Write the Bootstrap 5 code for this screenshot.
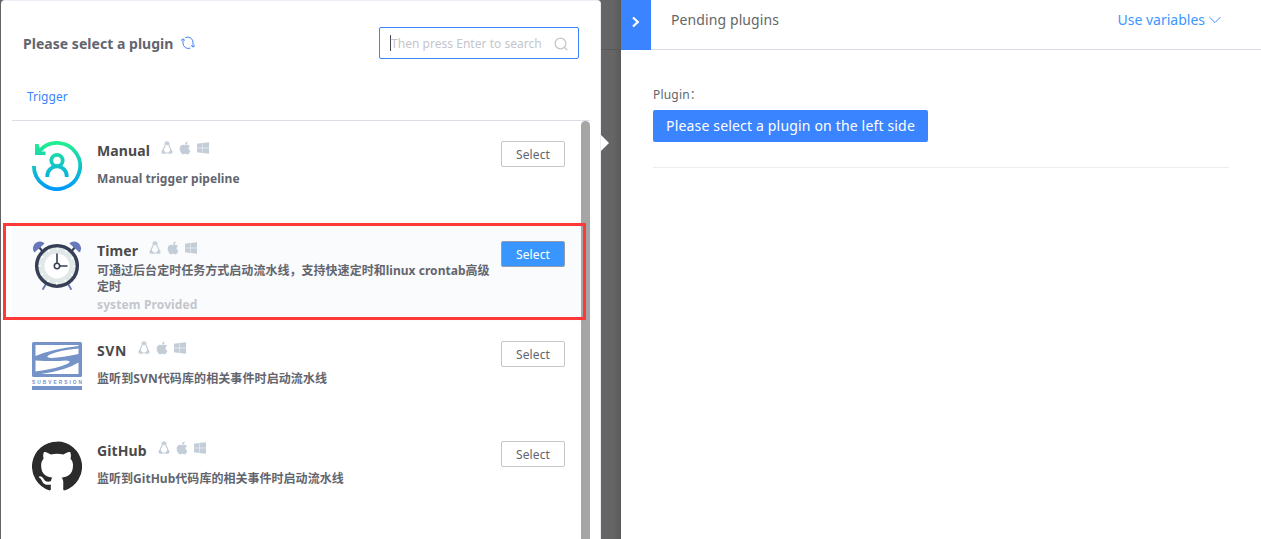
<!DOCTYPE html>
<html lang="en">
<head>
<meta charset="utf-8">
<meta name="viewport" content="width=device-width, initial-scale=1">
<title>Select a plugin</title>
<link href="https://cdn.jsdelivr.net/npm/bootstrap@5.3.0/dist/css/bootstrap.min.css" rel="stylesheet">
<style>
  body{font-family:"Noto Sans","Noto Sans CJK SC",sans-serif;font-size:12px;line-height:16px;color:#63656e;background:#636363;height:539px}
  .picker{width:600px;margin-left:1px;background:#fff;border-top:1px solid #ebeef5;border-right:1px solid #ebeef5;border-radius:4px 4px 0 0}
  .picker-head{height:85px;padding:0 21px 1px 22px}
  .picker-title{font-size:14px;font-weight:700;color:#63656e;padding-top:1px;letter-spacing:.03px}
  .search-box{width:200px;height:32px;border:1px solid #3a84ff;border-radius:2px;padding:1px 10px 0;color:#c4c6cc;letter-spacing:.03px}
  .caret{width:1px;height:16px;background:#45474d;margin-top:-1px}
  .tab-row{height:35px;margin:0 10px 0 11px;padding-left:15px;border-bottom:1px solid #dcdee5;color:#3a84ff}
  .tab-row span{line-height:21px}
  .plugins{margin:0 10px 0 11px}
  .thumb{width:9px;background:#a5a5a5;border-radius:5px 5px 0 0}
  .plugin{height:100px;padding:20px 16px 0 20px}
  .plugin.current{background:#fafbfd}
  .logo{width:50px;height:50px;margin-right:15px}
  .plugin-name{font-size:14px;line-height:20px;font-weight:700;color:#4a4a4a;letter-spacing:.1px}
  .os{height:14px;color:#c3cdd7;margin-left:11px}
  .desc{font-weight:700;width:398px;margin-top:10px;letter-spacing:.07px}
  .cjk{letter-spacing:.03px}
  .wide{letter-spacing:.6px}
  .current .desc{margin-top:2px;margin-right:-10px}
  .by{font-weight:700;color:#c4c6cc;margin-top:2px;letter-spacing:.12px}
  .pick{width:64px;height:26px;border:1px solid #c4c6cc;border-radius:2px;background:#fff;color:#63656e;font-size:12px;line-height:26px;padding:0;letter-spacing:.12px}
  .current .pick{background:#3a96ff;color:#fff;border-color:#979bb0}
  .marker{left:3px;top:223px;width:583px;height:97px;border:3px solid #ff3838}
  .gutter{width:20px;background:linear-gradient(90deg,#656565 60%,#5a5a5a)}
  .gutter-line{top:49px;height:1px;background:#575757}
  .pointer{left:0;top:135px;border:8px solid transparent;border-left-color:#fff;border-right:0}
  .side{background:#fff}
  .side-head{height:50px;border-bottom:1px solid #dcdee5;font-size:14px;padding-right:40px}
  .collapse-btn{width:30px;height:50px;background:#3a84ff;margin-right:20px;padding-bottom:6px}
  .side-head .label{line-height:40px;color:#666;letter-spacing:.1px}
  .use{line-height:40px;color:#3c96ff}
  .side-body{margin:0 32px;padding-top:37px;height:118px;border-bottom:1px solid #ebedf0}
  .field{letter-spacing:.2px}
  .hint{width:275px;height:32px;border-radius:2px;background:#3a84ff;color:#fff;font-size:14px;line-height:31px;margin-top:7px;letter-spacing:.17px}
</style>
</head>
<body class="d-flex overflow-hidden position-relative">
<svg class="position-absolute" width="0" height="0">
  <symbol id="tux" viewBox="0 0 12 14"><path d="M6 .8C4.400.8 4 2 4.100 3.700c.1 1.700-1.800 3.200-2 5.500M6 .8c1.600 0 2 1.200 1.900 2.900-.1 1.700 1.800 3.200 2 5.500" fill="none" stroke="currentColor" stroke-width="1.200"/><path d="M.8 9.300l1.500-.5 2.300 2.800-.7 1.500-3.400-.9zM11.200 9.300l-1.500-.5-2.300 2.800.7 1.500 3.400-.9zM4.300 11.600h3.400v.9H4.300zM4.300 1.500h3.400v1.500L6 4.600 4.300 3z" fill="currentColor"/></symbol>
  <symbol id="apple" viewBox="0 0 384 512"><path fill="currentColor" d="M318.700 268.700c-.2-36.700 16.400-64.400 50-84.800-18.800-26.900-47.200-41.700-84.700-44.600-35.500-2.800-74.300 20.700-88.500 20.700-15 0-49.400-19.700-76.400-19.700C63.300 141.200 4 184.800 4 273.500q0 39.300 14.400 81.200c12.800 36.700 59 126.700 107.200 125.200 25.200-.6 43-17.900 75.800-17.900 31.800 0 48.300 17.900 76.400 17.900 48.600-.7 90.400-82.500 102.600-119.300-65.200-30.700-61.700-90-61.700-91.900zm-56.600-164.200c27.300-32.400 24.800-61.900 24-72.500-24.100 1.400-52 16.400-67.900 34.900-17.500 19.800-27.800 44.300-25.600 71.900 26.100 2 49.900-11.400 69.500-34.300z"/></symbol>
  <symbol id="win" viewBox="0 0 12 14"><path fill="currentColor" d="M0 2.800l5-.7v4.700H0zM5.400 2L12 1.200v5.600H5.400zM0 7.200h5v4.700l-5-.7zM5.400 7.200H12v5.600l-6.600-.8z"/></symbol>
  <symbol id="os-set" viewBox="0 0 48 14"><use href="#tux" width="12" height="14"/><use href="#apple" x="17.500" y="-.3" width="13" height="14.600"/><use href="#win" x="36" width="12" height="14"/></symbol>
</svg>

<main class="picker flex-shrink-0 d-flex flex-column">
  <div class="picker-head d-flex align-items-center justify-content-between">
    <div class="d-flex align-items-center">
      <span class="picker-title">Please select a plugin</span>
      <svg class="ms-2" width="14" height="14" viewBox="0 0 14 14" fill="none" stroke="#3a84ff" stroke-width="1"><path d="M2 3.200v4A5.300 5.300 0 0 0 9.300 12.100M4.300 1.600A5.400 5.400 0 0 1 12 7v4M0 4.500l2-1.700 2 1.700M10 9.500l2 1.600 2-1.600"/></svg>
    </div>
    <div class="search-box d-flex align-items-center">
      <span class="caret"></span><span class="flex-grow-1 text-nowrap">Then press Enter to search</span>
      <svg width="14" height="14" viewBox="0 0 14 14" fill="none" stroke="#c4c6cc" stroke-width="1.300"><circle cx="6.500" cy="6.500" r="5.400"/><path d="M10.400 10.400l2.900 2.500"/></svg>
    </div>
  </div>
  <div class="tab-row"><span>Trigger</span></div>
  <div class="plugins d-flex flex-grow-1">
    <div class="flex-grow-1">
      <section class="plugin d-flex">
        <svg class="logo flex-shrink-0" viewBox="0 0 50 50"><defs><linearGradient id="mg" gradientUnits="userSpaceOnUse" x1="0" y1="0" x2="0" y2="50"><stop offset="0" stop-color="#22f28c"/><stop offset="1" stop-color="#0096ff"/></linearGradient></defs><g fill="none" stroke="url(#mg)" stroke-width="3.800"><path d="M1.900 25A23.100 23.100 0 1 0 7 10.500"/><circle cx="25" cy="19.500" r="5.700"/><path d="M15.300 36v-1a9.700 9.700 0 0 1 19.400 0v1"/></g><path d="M3 3v11h10.500v-3.500H9L6.500 3z" fill="url(#mg)"/></svg>
        <div class="flex-grow-1">
          <div class="d-flex"><span class="plugin-name">Manual</span><svg class="os" width="48" height="14"><use href="#os-set"/></svg></div>
          <div class="desc">Manual trigger pipeline</div>
        </div>
        <button class="btn pick flex-shrink-0">Select</button>
      </section>
      <section class="plugin current d-flex">
        <svg class="logo flex-shrink-0" viewBox="0 0 50 50">
          <path d="M14 43l-3 5M36 43l3 5" stroke="#6b7cc0" stroke-width="2" stroke-linecap="round"/>
          <path d="M6 5l6 7M44 5l-6 7" stroke="#37405a" stroke-width="2"/>
          <path d="M2.500 10.500C-.5 4 6 -1 11.500 2.500zM47.500 10.500C50.500 4 44 -1 38.500 2.500z" fill="#6878bd" stroke="#6878bd" stroke-width="1.500" stroke-linejoin="round"/>
          <circle cx="25" cy="25" r="20.300" fill="#e1e8e8" stroke="#363f56" stroke-width="3.500"/>
          <circle cx="25" cy="25" r="17.200" fill="none" stroke="#fff" stroke-width="2.400" stroke-dasharray="1.500 7.506" stroke-dashoffset=".75"/>
          <circle cx="25" cy="25" r="12.500" fill="#fff"/>
          <path d="M25 22V12.500M28 25H35.500" stroke="#363f56" stroke-width="1.600"/><circle cx="25" cy="25" r="2.700" fill="#fff" stroke="#363f56" stroke-width="1.600"/>
        </svg>
        <div class="flex-grow-1">
          <div class="d-flex"><span class="plugin-name">Timer</span><svg class="os" width="48" height="14"><use href="#os-set"/></svg></div>
          <div class="desc cjk">可通过后台定时任务方式启动流水线，支持快速定时和linux crontab高级定时</div>
          <div class="by">system Provided</div>
        </div>
        <button class="btn pick flex-shrink-0">Select</button>
      </section>
      <section class="plugin d-flex">
        <svg class="logo flex-shrink-0" viewBox="0 0 50 50">
          <rect y="1" width="50" height="35" rx="1.500" fill="#7593c7"/>
          <path d="M3.500 4H46.500V5Q20 8 3.500 15zM46.500 7.500V13Q31 16.500 19 17Q12 16.500 18 13.500Q28 9 46.500 7.500zM3.500 19.500Q22 20.500 34 19.500Q41 20 35 23Q24 28 3.500 30.500zM46.500 21.500V33H9Q34 29.500 46.500 21.500z" fill="#fff"/>
          <text x="0" y="42.500" font-family="Liberation Sans" font-size="4.800" font-weight="700" fill="#7593c7" textLength="50">SUBVERSION</text>
          <rect y="45" width="50" height="4" fill="#7593c7"/>
        </svg>
        <div class="flex-grow-1">
          <div class="d-flex"><span class="plugin-name wide">SVN</span><svg class="os" width="48" height="14"><use href="#os-set"/></svg></div>
          <div class="desc cjk" style="letter-spacing:.1px">监听到SVN代码库的相关事件时启动流水线</div>
        </div>
        <button class="btn pick flex-shrink-0">Select</button>
      </section>
      <section class="plugin d-flex">
        <svg class="logo flex-shrink-0" viewBox="0 0 16 16"><path fill="#2b2b2b" d="M8 .2a8 8 0 0 0-2.530 15.590c.4.070.55-.17.55-.38 0-.19-.010-.82-.010-1.490-2.010.37-2.530-.49-2.690-.94-.090-.23-.48-.94-.82-1.130-.28-.15-.68-.52-.010-.53.63-.010 1.080.58 1.230.82.72 1.210 1.870.87 2.330.66.070-.52.28-.87.51-1.070-1.780-.2-3.640-.89-3.640-3.950 0-.87.31-1.590.82-2.150-.080-.2-.36-1.020.080-2.120 0 0 .67-.21 2.200.82.64-.18 1.320-.27 2-.27s1.360.090 2 .27c1.530-1.040 2.200-.82 2.200-.82.44 1.100.16 1.920.080 2.120.51.56.82 1.270.82 2.150 0 3.070-1.870 3.750-3.650 3.950.29.25.54.73.54 1.480 0 1.070-.010 1.930-.010 2.200 0 .21.15.46.55.38A8 8 0 0 0 8 .2z"/></svg>
        <div class="flex-grow-1">
          <div class="d-flex"><span class="plugin-name">GitHub</span><svg class="os" width="48" height="14"><use href="#os-set"/></svg></div>
          <div class="desc cjk">监听到GitHub代码库的相关事件时启动流水线</div>
        </div>
        <button class="btn pick flex-shrink-0">Select</button>
      </section>
    </div>
    <div class="thumb"></div>
  </div>
</main>
<div class="gutter position-relative flex-shrink-0"><i class="gutter-line position-absolute w-100"></i><i class="pointer position-absolute"></i></div>
<aside class="side flex-grow-1">
  <header class="side-head d-flex">
    <div class="collapse-btn d-flex align-items-center justify-content-center"><svg width="8" height="12" viewBox="0 0 8 12" fill="none" stroke="#fff" stroke-width="2.200"><path d="M1 1.500L5.800 6 1 10.500"/></svg></div>
    <span class="label flex-grow-1">Pending plugins</span>
    <span class="use">Use variables</span>
    <svg class="ms-1 mt-3" width="12" height="8" viewBox="0 0 12 8" fill="none" stroke="#3c96ff"><path d="M.4 1L6 6.600 11.600 1"/></svg>
  </header>
  <div class="side-body"><span class="field">Plugin：</span><div class="hint text-center">Please select a plugin on the left side</div></div>
</aside>
<div class="marker position-absolute"></div>
<script src="https://cdn.jsdelivr.net/npm/bootstrap@5.3.0/dist/js/bootstrap.bundle.min.js"></script>
</body>
</html>
